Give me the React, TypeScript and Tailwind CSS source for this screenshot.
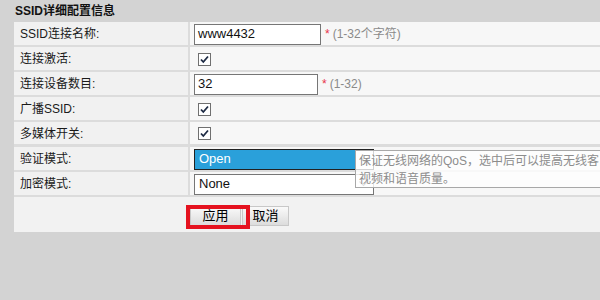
import React from "react";

const font = { fontFamily: '"Liberation Sans", "Noto Sans CJK SC", sans-serif' };

function Check() {
  return (
    <div className="w-[13px] h-[13px] border border-[#707070] bg-white flex items-center justify-center ml-[4px]">
      <svg width="11" height="11" viewBox="0 0 11 11">
        <path d="M2 5.5 L4.3 8 L9 2.5" stroke="#1d2a44" strokeWidth="1.8" fill="none" />
      </svg>
    </div>
  );
}

function Row({ label, children, sep = "border-b-2" }: { label: string; children: React.ReactNode; sep?: string }) {
  return (
    <div className={`flex h-[25px] ${sep} border-[#dcdcdc]`}>
      <div className="w-[176px] bg-[#f1f1f1] flex items-center pl-[6px] pt-[1px] text-[12px] text-[#1a1a1a] border-r-2 border-[#dcdcdc]">
        {label}
      </div>
      <div className="flex-1 bg-[#f7f7f7] flex items-center pl-[4px] pt-[1px]">{children}</div>
    </div>
  );
}

export default function App() {
  return (
    <div className="w-[600px] h-[300px] bg-[#d3d3d3] relative overflow-hidden" style={font}>
      <div className="h-[22px] flex items-center pl-[15px] text-[12px] font-bold text-[#111]">SSID详细配置信息</div>
      <div className="ml-[14px] flex flex-col">
        <Row label="SSID连接名称:">
          <div className="w-[127px] h-[21px] border border-[#767676] bg-white text-[13px] flex items-center pl-[3px] text-[#111]">www4432</div>
          <span className="text-[#e8334a] text-[12px] ml-[4px]">*</span>
          <span className="text-[#8a8a8a] text-[12px] ml-[3px]">(1-32个字符)</span>
        </Row>
        <Row label="连接激活:">
          <Check />
        </Row>
        <Row label="连接设备数目:">
          <div className="w-[124px] h-[21px] border border-[#767676] bg-white text-[13px] flex items-center pl-[3px] text-[#111]">32</div>
          <span className="text-[#e8334a] text-[12px] ml-[4px]">*</span>
          <span className="text-[#8a8a8a] text-[12px] ml-[3px]">(1-32)</span>
        </Row>
        <Row label="广播SSID:">
          <Check />
        </Row>
        <Row label="多媒体开关:" sep="border-b-[3px]">
          <Check />
        </Row>
        <Row label="验证模式:">
          <div className="w-[180px] h-[21px] border border-[#222] bg-[#2aa0da] text-[13px] flex items-center pl-[4px] text-white relative">
            Open
            <div className="absolute right-0 top-0 w-[18px] h-full bg-white border-l border-[#767676]">
              <svg className="absolute right-[4px] top-[7px]" width="9" height="6" viewBox="0 0 9 6">
                <path d="M0.5 0.5 L4.5 4.5 L8.5 0.5" stroke="#555" strokeWidth="1.4" fill="none" />
              </svg>
            </div>
          </div>
        </Row>
        <Row label="加密模式:">
          <div className="w-[180px] h-[21px] border border-[#767676] bg-white text-[13px] flex items-center pl-[4px] text-[#111] relative">
            None
            <svg className="absolute right-[5px] top-[6px]" width="9" height="6" viewBox="0 0 9 6">
              <path d="M0.5 0.5 L4.5 4.5 L8.5 0.5" stroke="#666" strokeWidth="1.2" fill="none" />
            </svg>
          </div>
        </Row>
        <div className="h-[35px] bg-[#f2f2f2] flex items-start pt-[9px] pl-[176px]">
          <button className="w-[51px] h-[20px] border border-[#c8c8c8] bg-gradient-to-b from-[#fafafa] to-[#dcdcdc] text-[13px] text-black flex items-center justify-center">应用</button>
          <button className="w-[47px] h-[20px] ml-[1px] border border-[#c8c8c8] bg-gradient-to-b from-[#fafafa] to-[#dcdcdc] text-[13px] text-black flex items-center justify-center">取消</button>
        </div>
      </div>
      <div className="absolute left-[186px] top-[205px] w-[64px] h-[24px] border-4 border-[#e5121f]" />
      <div className="absolute left-[355px] top-[150px] w-[260px] h-[38px] border border-[#a8a8a8] bg-white/80 text-[12px] leading-[18px] text-[#8c8c8c] pl-[3px] pt-[1px]">
        <div className="whitespace-nowrap">保证无线网络的QoS，选中后可以提高无线客</div>
        <div>视频和语音质量。</div>
      </div>
    </div>
  );
}
